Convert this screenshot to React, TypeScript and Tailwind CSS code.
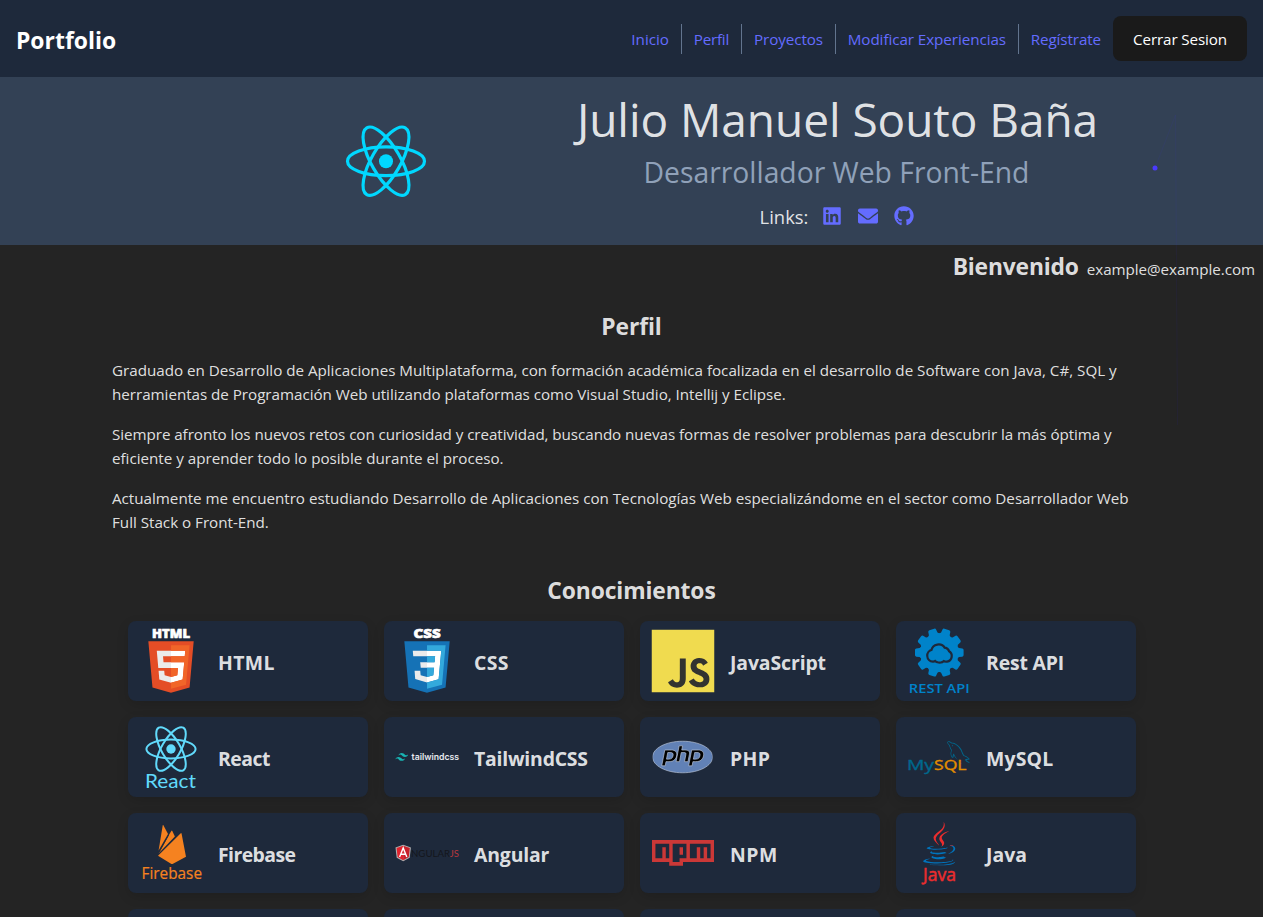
import React from "react";
import { SiPhp, SiMysql, SiJavascript, SiTailwindcss } from "react-icons/si";
import { FaJava, FaLinkedin, FaEnvelope, FaGithub } from "react-icons/fa";

const navLinks = [
  { label: "Inicio", box: "w-[63px] border-r" },
  { label: "Perfil", box: "w-[60px] border-r tracking-[-0.25px]" },
  { label: "Proyectos", box: "w-[94px] border-r tracking-[-0.08px]" },
  { label: "Modificar Experiencias", box: "w-[183px] border-r tracking-[-0.06px]" },
  { label: "Regístrate", box: "w-[94px] tracking-[-0.1px]" },
];

function Logo({ children }: { children?: React.ReactNode }) {
  return (
    <svg viewBox="0 0 64 64" className="size-16 shrink-0 overflow-visible">
      {children}
    </svg>
  );
}

function Atom({ cx, cy, rx, ry, r, width, color }: { cx: number; cy: number; rx: number; ry: number; r: number; width: number; color: string }) {
  return (
    <g fill="none" stroke={color} strokeWidth={width}>
      {[0, 60, 120].map((angle) => (
        <ellipse key={angle} cx={cx} cy={cy} rx={rx} ry={ry} transform={`rotate(${angle} ${cx} ${cy})`} />
      ))}
      <circle cx={cx} cy={cy} r={r} fill={color} stroke="none" />
    </g>
  );
}

const HtmlLogo = () => (
  <Logo>
    <text x="13" y="8.6" textLength="38" lengthAdjust="spacingAndGlyphs" fontSize="11.6" fontWeight="800" fill="#fff" stroke="#fff" strokeWidth="0.6">HTML</text>
    <g transform="translate(6.1 12.3) scale(2.16 2.14)">
      <path fill="#ebebeb" d="M5 4h7v16H5z" />
      <path fill="#fff" d="M12 4h7v16h-7z" />
      <path fill="#e44d26" d="M1.5 0h21l-1.91 21.563L11.977 24l-8.564-2.438L1.5 0zm7.031 9.75l-.232-2.718 10.059.003.23-2.622L5.412 4.41l.698 8.01h9.126l-.326 3.426-2.91.804-2.955-.81-.188-2.11H6.248l.33 4.171L12 19.351l5.379-1.443.744-8.157H8.531z" />
      <path fill="#f16529" d="M12 1.9h8.6l-1.65 18.35L12 22.2v-2.85l5.379-1.443.744-8.157H12V7.035h6.358l.23-2.622L12 4.41zM12 12.42h3.236l-.326 3.426-2.91.804z" />
    </g>
  </Logo>
);

const CssLogo = () => (
  <Logo>
    <text x="18.6" y="8.6" textLength="27" lengthAdjust="spacingAndGlyphs" fontSize="11.6" fontWeight="800" fill="#fff" stroke="#fff" strokeWidth="0.6">CSS</text>
    <g transform="translate(6.1 12.3) scale(2.16 2.14)">
      <path fill="#ebebeb" d="M5 4h7v16H5z" />
      <path fill="#fff" d="M12 4h7v16h-7z" />
      <path fill="#1572b6" d="M1.5 0h21l-1.91 21.563L11.977 24l-8.565-2.438L1.5 0zm17.09 4.413L5.41 4.41l.213 2.622 10.125.002-.255 2.716h-6.64l.24 2.573h6.182l-.366 3.523-2.91.804-2.956-.81-.188-2.11h-2.61l.29 3.855L12 19.288l5.373-1.53L18.59 4.414z" />
      <path fill="#33a9dc" d="M12 1.9h8.6l-1.65 18.35L12 22.2v-2.91l5.373-1.53L18.59 4.414 12 4.41zM12 7.033l3.748.001-.255 2.716H12zM12 12.323h3.275l-.366 3.523-2.909.804z" />
    </g>
  </Logo>
);

const JsLogo = () => (
  <Logo>
    <rect x="12" y="26" width="50" height="36" fill="#323330" />
    <SiJavascript x="0.5" y="0.5" size={63} color="#f0db4f" />
  </Logo>
);

const toothAngles = [0, 36, 72, 108, 144, 180, 216, 252, 288, 324];
const cloudPath = "M26 31.6a5 5 0 0 1-.6-9.9 6.3 6.3 0 0 1 11.6-2 4.5 4.5 0 0 1 4.2 3.3 4.6 4.6 0 0 1-1.4 8.6c-1.6.1-2.5-.2-3.2-.8-2 2.3-6 2.6-8.4-.3-.7.7-1.3 1-2.2 1.1z";

const RestLogo = () => (
  <Logo>
    <g fill="#0083ca">
      <circle cx="32.3" cy="23.6" r="19.3" />
      {toothAngles.map((angle) => (
        <path key={angle} transform={`rotate(${angle} 32.3 23.6)`} d="M50 17.4l2 1.7 3.3.4q1.3.2 1.3 1.6v5q0 1.4-1.3 1.6l-3.3.4-2 1.7z" />
      ))}
      <path d={cloudPath} fill="#0083ca" stroke="#1e293b" strokeWidth="4.4" strokeLinejoin="round" />
      <path d={cloudPath} />
      <text x="1.8" y="63.6" textLength="61" lengthAdjust="spacingAndGlyphs" fontSize="12.2" fontWeight="600">REST API</text>
    </g>
  </Logo>
);

const ReactLogo = () => (
  <Logo>
    <Atom cx={32} cy={24} rx={24.6} ry={9.4} r={4.7} width={2} color="#61dafb" />
    <text x="6" y="63" textLength="51" lengthAdjust="spacingAndGlyphs" fontSize="19" fill="#61dafb" fontFamily="Lato, sans-serif">React</text>
  </Logo>
);

const TailwindLogo = () => (
  <Logo>
    <SiTailwindcss x="0.2" y="25.4" size={13} color="#18b3b3" />
    <text x="16.6" y="35.2" textLength="47.4" lengthAdjust="spacingAndGlyphs" fontSize="8.8" fontWeight="600" fill="#e8eaee" fontFamily="Inter, sans-serif">tailwindcss</text>
  </Logo>
);

const PhpLogo = () => (
  <Logo>
    <ellipse cx="31.6" cy="32" rx="26" ry="13" fill="#000" />
    <SiPhp x="1.6" y="2" size={60} color="#6181b6" stroke="#c3cde0" strokeWidth="0.25" />
  </Logo>
);

const MysqlLogo = () => (
  <Logo>
    <defs>
      <clipPath id="dolphin">
        <rect x="36" y="12" width="28" height="26.3" />
      </clipPath>
    </defs>
    <g clipPath="url(#dolphin)">
      <SiMysql x="6.6" y="7" size={57} color="#00678c" />
    </g>
    <g strokeWidth="0.35">
      <text x="0" y="44.8" textLength="27" lengthAdjust="spacingAndGlyphs" fontSize="13.6" fill="#00678c" stroke="#00678c">My</text>
      <text x="27" y="44.8" textLength="32.5" lengthAdjust="spacingAndGlyphs" fontSize="13.6" fill="#e48e00" stroke="#e48e00">SQL</text>
    </g>
  </Logo>
);

const FirebaseLogo = () => (
  <Logo>
    <g fill="#f58220">
      <path d="M19 34.7L41.5 12.5q.9-.9 1.1.3L47 35.7 34 42.7q-1 .5-2 0z" />
      <path d="M19.6 29.4L23.7 4.6q.3-1 .8-.1L29 13z" />
      <path d="M19.5 32.6L30.5 13l1.8-3q.5-.8 1 0l2.6 5.5z" />
      <path d="M20 31.5l9.6-17.5" stroke="#1e293b" strokeWidth="0.9" />
      <text x="2.6" y="57.6" textLength="60.4" lengthAdjust="spacingAndGlyphs" fontSize="16.8" stroke="#f58220" strokeWidth="0.2">Firebase</text>
    </g>
  </Logo>
);

const AngularLogo = () => (
  <Logo>
    <path fill="#b3b3b3" d="M8.2 23.8l7.7 2.7-1.2 10.2-6.5 3.6-6.5-3.6L.5 26.5z" />
    <path fill="#c8202a" d="M8.2 24.8l6.6 2.3-1 9-5.6 3.1z" />
    <path fill="#e0232e" d="M8.2 24.8l-6.6 2.3 1 9 5.6 3.1z" />
    <path fill="none" stroke="#fff" strokeWidth="1.4" d="M4.6 36l3.6-9 3.6 9M6 33.2h4.4" />
    <g fontSize="10" fontFamily="Lato, sans-serif">
      <text x="16" y="35.8" textLength="39" lengthAdjust="spacingAndGlyphs" fill="#14161b">NGULAR</text>
      <text x="54.8" y="35.8" textLength="9.2" lengthAdjust="spacingAndGlyphs" fill="#b8383d">JS</text>
    </g>
  </Logo>
);

const NpmLogo = () => (
  <Logo>
    <g transform="translate(1 19) scale(.10764 .1147) translate(0 -160)">
      <path fill="#cb3837" d="M288 288h-32v-64h32v64zm288-128v192H288v32H160v-32H0V160h576zm-416 32H32v128h64v-96h32v96h32V192zm160 0H192v160h64v-32h64V192zm224 0H352v128h64v-96h32v96h32v-96h32v96h32V192z" />
    </g>
  </Logo>
);

const JavaLogo = () => (
  <Logo>
    <defs>
      <clipPath id="steam">
        <rect x="0" y="0" width="64" height="25" />
      </clipPath>
      <clipPath id="cup">
        <path d="M0 24h24.5v1H38v-2.5h26V46H0z" />
      </clipPath>
    </defs>
    <g clipPath="url(#cup)">
      <FaJava x="10.5" y="1" size={43.5} color="#0074bd" />
    </g>
    <g clipPath="url(#steam)">
      <FaJava x="10.5" y="1" size={43.5} color="#ea2d2e" />
    </g>
    <text x="16" y="59.6" textLength="33" lengthAdjust="spacingAndGlyphs" fontSize="19" fill="#ea2d2e" stroke="#ea2d2e" strokeWidth="0.5">Java</text>
  </Logo>
);

const skills: { name: string; tracking: string; logo: () => React.ReactNode }[] = [
  { name: "HTML", tracking: "tracking-[0.35px]", logo: HtmlLogo },
  { name: "CSS", tracking: "tracking-[0.4px]", logo: CssLogo },
  { name: "JavaScript", tracking: "tracking-[-0.1px]", logo: JsLogo },
  { name: "Rest API", tracking: "tracking-[-0.15px]", logo: RestLogo },
  { name: "React", tracking: "tracking-[-0.5px]", logo: ReactLogo },
  { name: "TailwindCSS", tracking: "tracking-[-0.2px]", logo: TailwindLogo },
  { name: "PHP", tracking: "tracking-[0.4px]", logo: PhpLogo },
  { name: "MySQL", tracking: "tracking-[0.2px]", logo: MysqlLogo },
  { name: "Firebase", tracking: "tracking-[-0.55px]", logo: FirebaseLogo },
  { name: "Angular", tracking: "tracking-[-0.15px]", logo: AngularLogo },
  { name: "NPM", tracking: "tracking-[0.5px]", logo: NpmLogo },
  { name: "Java", tracking: "tracking-normal", logo: JavaLogo },
];

export default function App() {
  return (
    <div className="relative h-[917px] overflow-hidden bg-[#242424] font-['Open_Sans',sans-serif] text-[15.2px] leading-6 text-white/87">
      <header className="flex h-[77px] items-center justify-between bg-[#1e293b] px-4">
        <h1 className="pt-1 text-[22.9px] leading-8 font-bold text-white">Portfolio</h1>
        <nav className="flex items-center">
          {navLinks.map((link) => (
            <a key={link.label} className={`flex h-[30px] items-center justify-end whitespace-nowrap border-slate-500 pr-3 pt-px text-[#646cff] ${link.box}`}>
              {link.label}
            </a>
          ))}
          <button className="h-[45px] w-[134px] rounded-lg bg-[#1a1a1a] pt-px tracking-[-0.12px] whitespace-nowrap text-white">Cerrar Sesion</button>
        </nav>
      </header>

      <section className="flex h-[168px] items-center bg-[#334155]">
        <div className="ml-[338px] flex w-24 justify-center">
          <svg viewBox="0 0 96 96" className="size-24">
            <Atom cx={48} cy={48.2} rx={38.5} ry={14.4} r={7} width={3.2} color="#00d8ff" />
          </svg>
        </div>
        <div className="ml-[140px] flex w-[525px] flex-col items-center pt-[3px] whitespace-nowrap">
          <h2 className="pl-0.5 text-[46px] leading-[48px] tracking-[-0.05px]">Julio Manuel Souto Baña</h2>
          <p className="mt-[11px] text-[28.3px] leading-9 text-slate-400">Desarrollador Web Front-End</p>
          <div className="mt-3 flex h-7 items-center gap-4 pl-px text-[#646cff]">
            <span className="-mr-0.5 pt-px text-[18.4px] text-white/87">Links:</span>
            <FaLinkedin size={20} className="-mt-px" />
            <FaEnvelope size={20} className="-mt-px" />
            <FaGithub size={20} className="-mt-px" />
          </div>
        </div>
      </section>

      <div className="flex h-[66px] items-baseline justify-end gap-2 pt-1.5 pr-2">
        <h2 className="text-[22.8px] leading-8 font-bold tracking-[-0.15px]">Bienvenido</h2>
        <span className="tracking-[-0.06px]">example@example.com</span>
      </div>

      <main className="px-[112px]">
        <h2 className="text-center text-[22.8px] leading-8 font-bold tracking-[-0.1px]">Perfil</h2>
        <div className="mt-[15px] flex flex-col gap-4 tracking-[-0.01px] whitespace-nowrap">
          <p>
            Graduado en Desarrollo de Aplicaciones Multiplataforma, con formación académica focalizada en el desarrollo de Software con Java, C#, SQL y
            <br />
            <span className="tracking-[-0.03px]">herramientas de Programación Web utilizando plataformas como Visual Studio, Intellij y Eclipse.</span>
          </p>
          <p>
            <span className="tracking-[-0.06px]">Siempre afronto los nuevos retos con curiosidad y creatividad, buscando nuevas formas de resolver problemas para descubrir la más óptima y</span>
            <br />
            eficiente y aprender todo lo posible durante el proceso.
          </p>
          <p>
            Actualmente me encuentro estudiando Desarrollo de Aplicaciones con Tecnologías Web especializándome en el sector como Desarrollador Web
            <br />
            Full Stack o Front-End.
          </p>
        </div>
        <h2 className="mt-[41px] text-center text-[22.8px] leading-8 font-bold tracking-[-0.1px]">Conocimientos</h2>
        <div className="mt-3.5 grid grid-cols-[repeat(4,240px)] gap-4 pl-4">
          {skills.map(({ name, tracking, logo: SkillLogo }) => (
            <div key={name} className="flex h-20 items-center gap-[15px] rounded-lg bg-[#1e293b] pl-[11px] shadow-[0_4px_12px_rgba(0,0,0,0.13)]">
              <SkillLogo />
              <h3 className={`pt-1 text-[19.4px] leading-7 font-bold whitespace-nowrap ${tracking}`}>{name}</h3>
            </div>
          ))}
          {[0, 1, 2, 3].map((slot) => (
            <div key={slot} className="h-20 rounded-lg bg-[#1e293b]" />
          ))}
        </div>
      </main>

      <svg className="pointer-events-none absolute top-0 left-0 h-[917px] w-[1263px]">
        <path d="M1155 168L1175.5 115L1177.5 425" fill="none" stroke="#3a2cff" strokeOpacity=".07" />
        <circle cx="1155" cy="168" r="2.5" fill="#4a3aff" />
      </svg>
    </div>
  );
}
